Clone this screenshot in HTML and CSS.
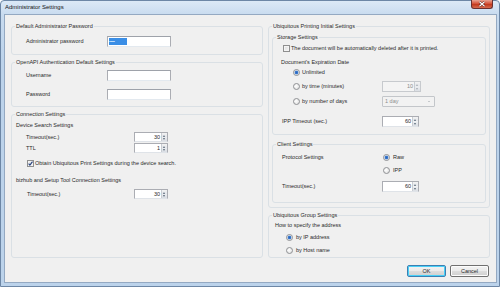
FILE: index.html
```html
<!DOCTYPE html>
<html>
<head>
<meta charset="utf-8">
<link rel="stylesheet" href="styles.css">
</head>
<body>
<div class="window">
  <div class="titlebar">
    <span class="title">Administrator Settings</span>
    <div class="close">
      <svg width="8" height="6" viewBox="0 0 8 6"><path d="M1.5 0.8 L6.5 5.2 M6.5 0.8 L1.5 5.2" stroke="#5a1c14" stroke-width="2.2"/><path d="M1.5 0.8 L6.5 5.2 M6.5 0.8 L1.5 5.2" stroke="#fff" stroke-width="1.2"/></svg>
    </div>
  </div>
  <div class="client">
    <div class="columns">
      <div class="col col-left">
        <fieldset class="gb gb-admin">
          <legend>Default Administrator Password</legend>
          <div class="row row-input pl14 mt6">
            <span class="lbl w81">Administrator password</span>
            <div class="input"><span class="sel">••••••</span></div>
          </div>
        </fieldset>
        <fieldset class="gb gb-openapi">
          <legend>OpenAPI Authentication Default Settings</legend>
          <div class="row row-input pl14 mt4">
            <span class="lbl w81">Username</span>
            <div class="input"></div>
          </div>
          <div class="row row-input pl14 mt8">
            <span class="lbl w81">Password</span>
            <div class="input"></div>
          </div>
        </fieldset>
        <fieldset class="gb gb-conn">
          <legend>Connection Settings</legend>
          <div class="sub pl4 mt4">Device Search Settings</div>
          <div class="row row-spin pl14 mt3">
            <span class="lbl w108">Timeout(sec.)</span>
            <div class="spin w34"><span class="val">30</span><span class="arrows"></span></div>
          </div>
          <div class="row row-spin pl14 mt1">
            <span class="lbl w108">TTL</span>
            <div class="spin w34"><span class="val">1</span><span class="arrows"></span></div>
          </div>
          <div class="row row-check pl15 mt7">
            <span class="check checked"><svg width="7" height="7" viewBox="0 0 7 7"><path d="M1.6 3.6 L2.9 5.1 L5.5 1.6" fill="none" stroke="#24407e" stroke-width="1.1"/></svg></span>
            <span>Obtain Ubiquitous Print Settings during the device search.</span>
          </div>
          <div class="sub pl4 mt10">bizhub and Setup Tool Connection Settings</div>
          <div class="row row-spin pl15 mt5">
            <span class="lbl w107">Timeout(sec.)</span>
            <div class="spin w34"><span class="val">30</span><span class="arrows"></span></div>
          </div>
        </fieldset>
      </div>
      <div class="col col-right">
        <fieldset class="gb gb-ubi">
          <legend>Ubiquitous Printing Initial Settings</legend>
          <fieldset class="gb gb-storage">
            <legend>Storage Settings</legend>
            <div class="row row-check pl10 mt4">
              <span class="check"></span>
              <span>The document will be automatically deleted after it is printed.</span>
            </div>
            <div class="sub pl8 mt7">Document's Expiration Date</div>
            <div class="row row-input pl20 mt1">
              <span class="radio on"></span><span>Unlimited</span>
            </div>
            <div class="row row-input pl20 mt3">
              <span class="lbl w89"><span class="radio"></span><span>by time (minutes)</span></span>
              <div class="spin w39 disabled"><span class="val">10</span><span class="arrows"></span></div>
            </div>
            <div class="row row-input pl20 mt4">
              <span class="lbl w89"><span class="radio"></span><span>by number of days</span></span>
              <div class="combo"><span class="val">1 day</span><span class="drop"></span></div>
            </div>
            <div class="row row-input pl9 mt9">
              <span class="lbl w100">IPP Timeout (sec.)</span>
              <div class="spin w37"><span class="val">60</span><span class="arrows"></span></div>
            </div>
          </fieldset>
          <fieldset class="gb gb-client">
            <legend>Client Settings</legend>
            <div class="row row-input pl9 mt4">
              <span class="lbl w101">Protocol Settings</span>
              <span class="radio on"></span><span class="rtext">Raw</span>
            </div>
            <div class="row row-input pl110 mt2">
              <span class="radio"></span><span class="rtext">IPP</span>
            </div>
            <div class="row row-input pl9 mt5">
              <span class="lbl w100">Timeout(sec.)</span>
              <div class="spin w37"><span class="val">60</span><span class="arrows"></span></div>
            </div>
          </fieldset>
        </fieldset>
        <fieldset class="gb gb-group">
          <legend>Ubiquitous Group Settings</legend>
          <div class="sub pl6 mt3">How to specify the address</div>
          <div class="row row-input pl17 mt3">
            <span class="radio on"></span><span class="rtext">by IP address</span>
          </div>
          <div class="row row-input pl17 mt2">
            <span class="radio"></span><span class="rtext">by Host name</span>
          </div>
        </fieldset>
      </div>
    </div>
    <div class="buttons">
      <div class="btn default">OK</div>
      <div class="btn">Cancel</div>
    </div>
  </div>
</div>
</body>
</html>
```
FILE: styles.css
```css
* { box-sizing: border-box; }
html, body { margin: 0; padding: 0; }
body {
  width: 500px; height: 287px; overflow: hidden;
  background: #ffffff;
  font-family: "Liberation Sans", Arial, sans-serif;
  font-size: 5.5px; line-height: 7px; color: #2a2a2a;
}
.window {
  width: 500px; height: 287px;
  display: flex; flex-direction: column;
  border: 1px solid #6d87a6;
  border-radius: 4px 4px 0 0;
  background: linear-gradient(#dce9f6, #c8dbef 14px, #bcd3eb 60px, #bcd3eb);
}
.titlebar {
  height: 13px; flex: none;
  display: flex; align-items: flex-start;
  padding-left: 4px;
}
.title {
  font-size: 6px; line-height: 13px; color: #151515;
}
.close {
  margin-left: auto; margin-right: 6px;
  width: 22px; height: 9px; margin-top: -1px;
  border: 1px solid #6b3030;
  border-top: none;
  border-radius: 0 0 3px 3px;
  background: linear-gradient(#e8a393, #d5533a 45%, #c23a1f 55%, #d66a4f);
  display: flex; align-items: center; justify-content: center;
}
.close svg { display: block; }
.client {
  flex: none;
  margin: 0 2px 3px 3px;
  height: 269px;
  border: 1px solid #94a9c2;
  background: #f0f0f0;
  padding: 8px 6px 0 6px;
  display: flex; flex-direction: column;
}
.columns { display: flex; gap: 5px; }
.col { display: flex; flex-direction: column; }
.col-left { width: 252px; }
.col-right { width: 222px; }

.gb {
  margin: 0; padding: 0;
  border: 1px solid #dae0e5;
  border-radius: 3px;
  min-width: 0;
  display: flex; flex-direction: column;
}
.gb > legend {
  margin-left: 3px; padding: 0 1px;
  font-size: 5.5px; line-height: 7px;
}
.gb-admin { height: 32px; }
.gb-openapi { height: 48px; margin-top: 4px; }
.gb-conn { height: 147px; margin-top: 4px; }
.gb-ubi { height: 185px; }
.gb-storage { height: 101px; margin: 4px 3px 0 3px; }
.gb-client { height: 62px; margin: 6px 3px 0 3px; }
.gb-group { height: 46px; margin-top: 4px; }

.row { display: flex; align-items: center; flex: none; }
.row-input { height: 11px; }
.row-spin { height: 10px; }
.row-check { height: 7px; }
.sub { height: 7px; flex: none; }

.pl4 { padding-left: 4px; }
.pl6 { padding-left: 6px; }
.pl8 { padding-left: 8px; }
.pl9 { padding-left: 9px; }
.pl10 { padding-left: 10px; }
.pl14 { padding-left: 14px; }
.pl15 { padding-left: 15px; }
.pl17 { padding-left: 17px; }
.pl20 { padding-left: 20px; }
.pl110 { padding-left: 110px; }
.mt1 { margin-top: 1px; }
.mt2 { margin-top: 2px; }
.mt3 { margin-top: 3px; }
.mt4 { margin-top: 4px; }
.mt5 { margin-top: 5px; }
.mt6 { margin-top: 6px; }
.mt7 { margin-top: 7px; }
.mt8 { margin-top: 8px; }
.mt9 { margin-top: 9px; }
.mt10 { margin-top: 10px; }

.lbl { flex: none; display: flex; align-items: center; }
.w81 { width: 81px; }
.w89 { width: 89px; }
.w100 { width: 100px; }
.w101 { width: 101px; }
.w107 { width: 107px; }
.w108 { width: 108px; }

.input {
  width: 64px; height: 11px;
  border: 1px solid #abadb3;
  border-top-color: #9ea2aa;
  border-bottom-color: #e3e9ef;
  background: #fff;
  padding: 1px 0 0 1px;
  display: flex; align-items: flex-start;
}
.sel {
  display: block; width: 18px; height: 7px;
  background: #3a8ee6;
  color: #dfeeff; font-size: 4px; line-height: 7px;
  letter-spacing: -0.5px; overflow: hidden;
}

.spin {
  height: 100%;
  display: flex;
  border: 1px solid #abadb3;
  border-bottom-color: #dfe3e8;
  background: #fff;
}
.row-input .spin { height: 11px; }
.w34 { width: 34px; }
.w37 { width: 37px; }
.w39 { width: 39px; }
.spin .val { flex: 1; text-align: right; padding-right: 1px; line-height: 8px; }
.spin .arrows {
  width: 6px; flex: none;
  background:
    linear-gradient(#f3f3f3, #e2e5ea) top / 100% 50% no-repeat,
    linear-gradient(#ebedf0, #d9dde3) bottom / 100% 50% no-repeat;
  border-left: 1px solid #c9cdd3;
  position: relative;
}
.spin .arrows::before, .spin .arrows::after {
  content: ""; position: absolute; left: 1px;
  border-left: 1.5px solid transparent; border-right: 1.5px solid transparent;
}
.spin .arrows::before { top: 1.5px; border-bottom: 2px solid #5a6878; }
.spin .arrows::after { bottom: 1.5px; border-top: 2px solid #5a6878; }
.spin.disabled { background: #f4f4f4; border-color: #c7cace; }
.spin.disabled .val { color: #8b8b8b; }
.spin.disabled .arrows::before { border-bottom-color: #a7adb4; }
.spin.disabled .arrows::after { border-top-color: #a7adb4; }

.combo {
  width: 53px; height: 11px;
  border: 1px solid #c3c6ca; border-radius: 1px;
  background: #f2f2f2;
  display: flex; align-items: center;
  color: #8d8d8d;
}
.combo .val { flex: 1; padding-left: 2px; }
.combo .drop {
  width: 0; height: 0; margin-right: 4px;
  border-left: 1.5px solid transparent; border-right: 1.5px solid transparent;
  border-top: 1.6px solid #9aa0a6;
}

.check {
  width: 7px; height: 7px; flex: none; margin-right: 1px;
  border: 1px solid #8f8f8f;
  background: linear-gradient(135deg, #dcdcdc, #f6f6f6);
  box-shadow: inset 0 0 0 1px #f4f4f4;
  display: flex; align-items: center; justify-content: center;
}
.check svg { display: block; flex: none; margin: -1px; }

.radio {
  width: 7px; height: 7px; flex: none; margin-right: 2px;
  border: 1px solid #8f9194; border-radius: 50%;
  background: radial-gradient(circle at 40% 40%, #ffffff, #dcdcdc);
}
.radio.on {
  background: radial-gradient(circle, #2a62b8 0, #3b7bd0 1.4px, #dfe6ee 2.2px, #f2f2f2 3px);
}
.rtext { margin-left: 1px; }

.buttons {
  display: flex; justify-content: flex-end; gap: 4px;
  margin-top: 7px; margin-right: 1px;
}
.btn {
  width: 39px; height: 12px;
  border: 1px solid #707070; border-radius: 2px;
  background: linear-gradient(#f2f2f2, #ebebeb 50%, #dddddd 51%, #cfcfcf);
  box-shadow: inset 0 0 0 1px #fcfcfc;
  text-align: center; line-height: 10px;
}
.btn.default {
  border-color: #3c7fb1;
  box-shadow: inset 0 0 0 1px #48d0f8;
}
```
